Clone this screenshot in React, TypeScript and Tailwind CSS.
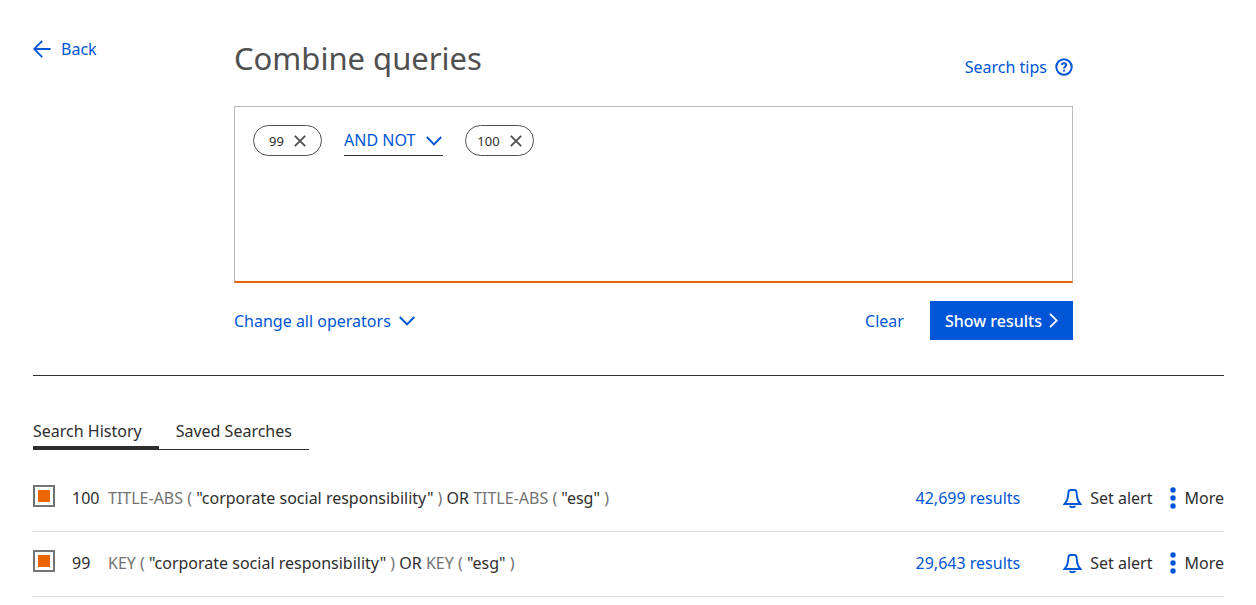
import { useState } from "react";

interface IClause {
    field: string;
    term: string;
}

interface IQuery {
    id: number;
    clauses: IClause[];
    results: string;
}

const queries: IQuery[] = [
    {
        id: 100,
        clauses: [
            { field: "TITLE-ABS", term: "corporate social responsibility" },
            { field: "TITLE-ABS", term: "esg" },
        ],
        results: "42,699",
    },
    {
        id: 99,
        clauses: [
            { field: "KEY", term: "corporate social responsibility" },
            { field: "KEY", term: "esg" },
        ],
        results: "29,643",
    },
];

function Chevron({ className }: { className: string }) {
    return (
        <svg viewBox="0 0 16 10" fill="none" stroke="currentColor" strokeWidth="2" className={className} aria-hidden="true">
            <path d="M0.8 1 L8 8.4 L15.2 1" />
        </svg>
    );
}

function BellIcon() {
    return (
        <svg viewBox="0 0 19 20" fill="none" stroke="currentColor" strokeWidth="1.9" className="h-5 w-[19px] text-[#0056d6]" aria-hidden="true">
            <path d="M1.6 16 C3.8 13.8 4.8 11.2 5 8.4 L5.5 4 C5.7 2.6 6.4 2 7.6 2 H11.4 C12.6 2 13.3 2.6 13.5 4 L14 8.4 C14.2 11.2 15.2 13.8 17.4 16 Z" />
            <path d="M6.8 18 C7.8 19.6 11.2 19.6 12.2 18" />
        </svg>
    );
}

function Chip({ label }: { label: number }) {
    return (
        <span className="flex h-[31px] w-[69px] items-center justify-center gap-[10px] rounded-full border border-[#505050] text-[13px] leading-5 text-[#2e2e2e]">
            {label}
            <button aria-label={`Remove ${label}`} className="text-[#505050]">
                <svg viewBox="0 0 12 12" fill="none" stroke="currentColor" strokeWidth="1.8" className="h-3 w-3">
                    <path d="M0.8 0.8 L11.2 11.2 M11.2 0.8 L0.8 11.2" />
                </svg>
            </button>
        </span>
    );
}

function QueryRow({ query }: { query: IQuery }) {
    return (
        <li className="flex h-[65px] items-center border-b border-[#dcdcdc] pb-[2px]">
            <input
                id={`query-${query.id}`}
                type="checkbox"
                defaultChecked
                className="mr-[17px] mb-1 h-[22px] w-[22px] shrink-0 appearance-none border-2 border-[#737373] bg-white bg-clip-content p-[3px] checked:bg-[#eb6500]"
            />
            <label htmlFor={`query-${query.id}`} className="w-9 shrink-0">{query.id}</label>
            <p className="flex-1 text-[#737373]">
                {query.clauses.map((clause, index) => (
                    <span key={index}>
                        {index > 0 && <span className="text-[#2e2e2e]"> OR </span>}
                        {clause.field} ( <span className="text-[#2e2e2e]">"{clause.term}"</span> )
                    </span>
                ))}
            </p>
            <a href="#results" className="text-[#0056d6]">{query.results} results</a>
            <button className="ml-[43px] flex items-center gap-2">
                <BellIcon />
                Set alert
            </button>
            <button className="ml-[18px] flex items-center gap-2">
                <svg viewBox="0 0 6 22" fill="currentColor" className="h-[22px] w-[6px] text-[#0056d6]" aria-hidden="true">
                    <circle cx="3" cy="3" r="2.7" />
                    <circle cx="3" cy="11" r="2.7" />
                    <circle cx="3" cy="19" r="2.7" />
                </svg>
                More
            </button>
        </li>
    );
}

export default function App() {
    const [tab, setTab] = useState("history");

    return (
        <main className="bg-white pr-8 pl-[33px] font-['Noto_Sans',sans-serif] text-base leading-6 text-[#2e2e2e]">
            <section className="flex border-b border-[#2e2e2e] pt-9 pb-[35px]">
                <div className="w-[201px] shrink-0 pt-px">
                    <a href="#back" className="inline-flex items-center gap-[10px] text-[#0056d6]">
                        <svg viewBox="0 0 18 18" fill="none" stroke="currentColor" strokeWidth="1.8" className="h-[18px] w-[18px]" aria-hidden="true">
                            <path d="M17.6 9 H1.2 M9.2 0.8 L1.2 9 L9.2 17.2" />
                        </svg>
                        Back
                    </a>
                </div>

                <div className="mr-[151px] flex-1">
                    <header className="flex h-[70px] items-start justify-between">
                        <h1 className="text-[31px] leading-[44px] text-[#505050]">Combine queries</h1>
                        <a href="#tips" className="mt-[19px] flex items-center gap-2 text-[#0056d6]">
                            Search tips
                            <svg viewBox="0 0 18 18" fill="none" stroke="currentColor" strokeWidth="2" className="h-[18px] w-[18px]" aria-hidden="true">
                                <circle cx="9" cy="9" r="7.7" />
                                <path d="M6.8 6.8 C7 4.7 11.2 4.6 11.2 7 C11.2 8.6 9.1 8.6 9.1 10.6 M9.1 11.7 V13.5" />
                            </svg>
                        </a>
                    </header>

                    <div className="flex h-[177px] items-start gap-[22px] border border-b-2 border-[#b9b9b9] border-b-[#eb6500] px-[18px] py-[18px]">
                        <Chip label={99} />
                        <div className="relative h-[31px] border-b border-[#2e2e2e] text-[#0056d6]">
                            <select aria-label="Operator" defaultValue="AND NOT" className="h-[30px] appearance-none bg-transparent pr-[27px]">
                                <option>AND</option>
                                <option>OR</option>
                                <option>AND NOT</option>
                            </select>
                            <Chevron className="pointer-events-none absolute top-[11px] right-px h-[10px] w-4" />
                        </div>
                        <Chip label={100} />
                    </div>

                    <div className="mt-[18px] flex h-[39px] items-center text-[#0056d6]">
                        <button aria-haspopup="menu" className="flex items-center gap-2">
                            Change all operators
                            <Chevron className="h-[10px] w-4" />
                        </button>
                        <button className="mr-[26px] ml-auto">Clear</button>
                        <button className="flex h-full items-center gap-[7px] bg-[#0056d6] px-[15px] font-medium text-white">
                            Show results
                            <svg viewBox="0 0 9 15" fill="none" stroke="currentColor" strokeWidth="1.8" className="h-[15px] w-[9px]" aria-hidden="true">
                                <path d="M1 0.8 L7.8 7.5 L1 14.2" />
                            </svg>
                        </button>
                    </div>
                </div>
            </section>

            <div role="tablist" className="mt-[43px] flex">
                <button
                    role="tab"
                    aria-selected={tab === "history"}
                    onClick={() => setTab("history")}
                    className="flex h-[31px] items-start border-b border-[#2e2e2e] pr-[17px] aria-selected:border-b-4"
                >
                    Search History
                </button>
                <button
                    role="tab"
                    aria-selected={tab === "saved"}
                    onClick={() => setTab("saved")}
                    className="flex h-[31px] items-start border-b border-[#2e2e2e] px-[17px] aria-selected:border-b-4"
                >
                    Saved Searches
                </button>
            </div>

            <ul className="mt-[17px]">
                {queries.map((query) => (
                    <QueryRow key={query.id} query={query} />
                ))}
            </ul>
        </main>
    );
}
